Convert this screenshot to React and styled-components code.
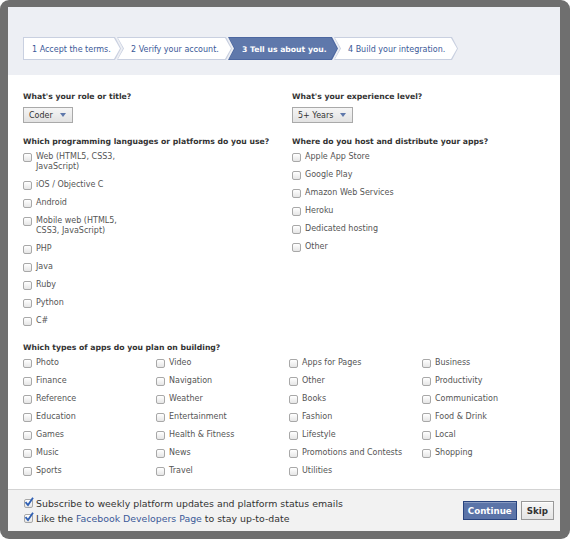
import React from "react";
import styled, { createGlobalStyle } from "styled-components";

const GlobalStyle = createGlobalStyle`
  html, body {
    margin: 0;
    padding: 0;
    background: #ffffff;
  }
  body {
    font-family: "DejaVu Sans", "Liberation Sans", sans-serif;
    font-size: 8px;
    color: #333;
  }
`;

const Frame = styled.div`
  width: 570px;
  height: 539px;
  box-sizing: border-box;
  background: #6f6f6f;
  border-radius: 9px;
  padding: 7px 10px 8px 8px;
`;

const Dialog = styled.div`
  height: 100%;
  background: #fff;
  display: flex;
  flex-direction: column;
`;

const Band = styled.div`
  height: 68px;
  box-sizing: border-box;
  background: #edeff4;
  padding: 30px 0 0 15px;
`;

const Steps = styled.div`
  display: flex;
`;

const chevron = (first) =>
  first
    ? "polygon(0 0, calc(100% - 6px) 0, 100% 50%, calc(100% - 6px) 100%, 0 100%)"
    : "polygon(0 0, calc(100% - 6px) 0, 100% 50%, calc(100% - 6px) 100%, 0 100%, 6px 50%)";

const StepEdge = styled.div`
  width: ${(p) => p.$w}px;
  height: 23px;
  margin-left: ${(p) => (p.$first ? 0 : -4)}px;
  padding: 1px;
  box-sizing: border-box;
  background: ${(p) => (p.$active ? "#4d67a0" : "#c9d0e0")};
  clip-path: ${(p) => chevron(p.$first)};
  display: flex;
`;

const StepFace = styled.div`
  flex: 1;
  display: flex;
  align-items: center;
  padding-left: ${(p) => (p.$first ? 8 : 13)}px;
  padding-top: 1px;
  background: ${(p) => (p.$active ? "#5f78ab" : "#ffffff")};
  color: ${(p) => (p.$active ? "#ffffff" : "#3b5998")};
  font-weight: ${(p) => (p.$active ? "bold" : "normal")};
  font-size: ${(p) => (p.$active ? 7.7 : 8)}px;
  clip-path: ${(p) => chevron(p.$first)};
  white-space: nowrap;
`;

const Body = styled.div`
  flex: 1;
  padding: 16px 15px 0;
`;

const Columns = styled.div`
  display: grid;
  grid-template-columns: 269px 1fr;
  margin-bottom: ${(p) => p.$gap || 0}px;
`;

const Section = styled.div`
  display: flex;
  flex-direction: column;
  align-items: flex-start;
`;

const Heading = styled.div`
  font-weight: bold;
  font-size: 7.7px;
  color: #333;
  line-height: 12px;
  margin-bottom: 4px;
  white-space: nowrap;
`;

const Select = styled.div`
  display: flex;
  align-items: center;
  gap: 7px;
  height: 16px;
  box-sizing: border-box;
  padding: 0 6px 0 5px;
  border: 1px solid #a9a9a9;
  background: linear-gradient(#f5f5f5, #e2e2e2);
  color: #333;
`;

const Caret = styled.span`
  width: 0;
  height: 0;
  border-left: 3.5px solid transparent;
  border-right: 3.5px solid transparent;
  border-top: 4px solid #5f78ab;
`;

const List = styled.div`
  display: flex;
  flex-direction: column;
  gap: 8px;
`;

const Grid = styled.div`
  display: grid;
  grid-template-columns: repeat(4, 133px);
  grid-template-rows: repeat(7, 10px);
  grid-auto-flow: column;
  row-gap: 8px;
`;

const Item = styled.label`
  display: flex;
  align-items: flex-start;
  gap: 4px;
  line-height: 10px;
  color: #555;
  width: ${(p) => p.$w || "auto"};
  white-space: ${(p) => (p.$w ? "normal" : "nowrap")};
`;

const Box = styled.span`
  flex: none;
  width: 9px;
  height: 9px;
  margin-top: 0.5px;
  box-sizing: border-box;
  border: 1px solid #a8a8a8;
  border-radius: 2px;
  background: linear-gradient(#ffffff, #e6e6e6);
  display: flex;
  align-items: center;
  justify-content: center;
  overflow: visible;
`;

const Footer = styled.div`
  height: 42px;
  box-sizing: border-box;
  border-top: 1px solid #d3d3d3;
  background: #f2f2f2;
  display: flex;
  align-items: center;
  justify-content: space-between;
  padding: 0 6px 0 16px;
`;

const FooterChecks = styled.div`
  display: flex;
  flex-direction: column;
`;

const FooterLine = styled.label`
  display: flex;
  align-items: center;
  gap: 3px;
  font-size: 9.4px;
  line-height: 15px;
  color: #333;
  white-space: nowrap;
`;

const Link = styled.a`
  color: #3b5998;
  text-decoration: none;
`;

const Buttons = styled.div`
  display: flex;
  gap: 4px;
`;

const Button = styled.button`
  height: 19px;
  box-sizing: border-box;
  padding: 0 ${(p) => (p.$primary ? 4 : 5)}px;
  font-family: inherit;
  font-size: 8.7px;
  font-weight: bold;
  border: 1px solid ${(p) => (p.$primary ? "#29447e" : "#999")};
  background: ${(p) => (p.$primary ? "#5b74a8" : "linear-gradient(#f7f7f7, #e4e4e4)")};
  color: ${(p) => (p.$primary ? "#fff" : "#333")};
  box-shadow: inset 0 1px 0 ${(p) => (p.$primary ? "#8a9cc2" : "#fff")};
`;

const Check = ({ checked }) => (
  <Box>
    {checked && (
      <svg width="10" height="10" viewBox="0 0 10 10" style={{ marginTop: -2, marginLeft: 1, flex: "none" }}>
        <path d="M1.5 5.2 L4 8 L9 0.8" fill="none" stroke="#2f5fb3" strokeWidth="1.8" />
      </svg>
    )}
  </Box>
);

const Option = ({ children, width, checked }) => (
  <Item $w={width}>
    <Check checked={checked} />
    <span>{children}</span>
  </Item>
);

const steps = [
  { label: "1 Accept the terms.", w: 98 },
  { label: "2 Verify your account.", w: 115 },
  { label: "3 Tell us about you.", w: 110, active: true },
  { label: "4 Build your integration.", w: 124 },
];

const languages = [
  "Web (HTML5, CSS3, JavaScript)",
  "iOS / Objective C",
  "Android",
  "Mobile web (HTML5, CSS3, JavaScript)",
  "PHP",
  "Java",
  "Ruby",
  "Python",
  "C#",
];

const hosts = [
  "Apple App Store",
  "Google Play",
  "Amazon Web Services",
  "Heroku",
  "Dedicated hosting",
  "Other",
];

const appTypes = [
  ["Photo", "Finance", "Reference", "Education", "Games", "Music", "Sports"],
  ["Video", "Navigation", "Weather", "Entertainment", "Health & Fitness", "News", "Travel"],
  ["Apps for Pages", "Other", "Books", "Fashion", "Lifestyle", "Promotions and Contests", "Utilities"],
  ["Business", "Productivity", "Communication", "Food & Drink", "Local", "Shopping"],
];

export default function App() {
  return (
    <>
      <GlobalStyle />
      <Frame>
        <Dialog>
          <Band>
            <Steps>
              {steps.map((s, i) => (
                <StepEdge key={s.label} $w={s.w} $first={i === 0} $active={s.active}>
                  <StepFace $first={i === 0} $active={s.active}>
                    {s.label}
                  </StepFace>
                </StepEdge>
              ))}
            </Steps>
          </Band>

          <Body>
            <Columns $gap={13}>
              <Section>
                <Heading>What's your role or title?</Heading>
                <Select>
                  Coder <Caret />
                </Select>
              </Section>
              <Section>
                <Heading>What's your experience level?</Heading>
                <Select>
                  5+ Years <Caret />
                </Select>
              </Section>
            </Columns>

            <Columns $gap={16}>
              <Section>
                <Heading>Which programming languages or platforms do you use?</Heading>
                <List>
                  {languages.map((l) => (
                    <Option key={l} width="115px">
                      {l}
                    </Option>
                  ))}
                </List>
              </Section>
              <Section>
                <Heading>Where do you host and distribute your apps?</Heading>
                <List>
                  {hosts.map((h) => (
                    <Option key={h}>{h}</Option>
                  ))}
                </List>
              </Section>
            </Columns>

            <Section>
              <Heading>Which types of apps do you plan on building?</Heading>
              <Grid>
                {appTypes.flat().map((t, i) => (
                  <Option key={t + i}>{t}</Option>
                ))}
              </Grid>
            </Section>
          </Body>

          <Footer>
            <FooterChecks>
              <FooterLine>
                <Check checked />
                Subscribe to weekly platform updates and platform status emails
              </FooterLine>
              <FooterLine>
                <Check checked />
                <span>
                  Like the <Link href="#">Facebook Developers Page</Link> to stay up-to-date
                </span>
              </FooterLine>
            </FooterChecks>
            <Buttons>
              <Button $primary>Continue</Button>
              <Button>Skip</Button>
            </Buttons>
          </Footer>
        </Dialog>
      </Frame>
    </>
  );
}
